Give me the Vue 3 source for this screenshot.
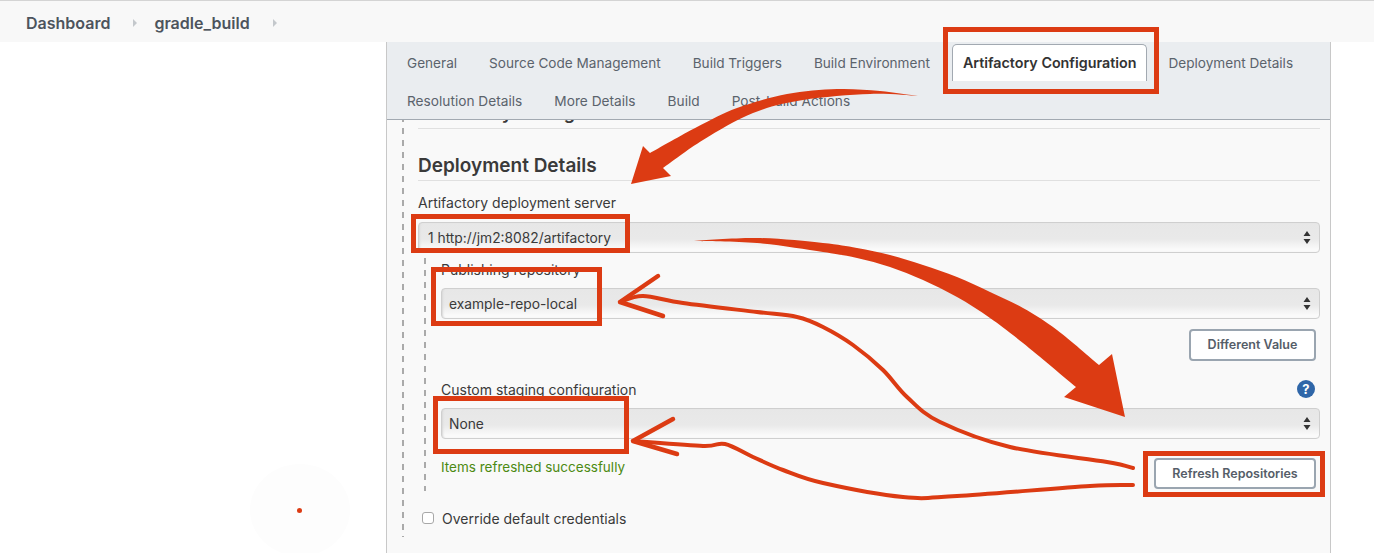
<script setup>
const firstRow = ['General', 'Source Code Management', 'Build Triggers', 'Build Environment']
const secondRow = ['Resolution Details', 'More Details', 'Build', 'Post-build Actions']

function smooth(pts) {
  let d = ''
  for (let i = 0; i < pts.length - 1; i++) {
    const p0 = pts[i - 1] || pts[i]
    const p1 = pts[i]
    const p2 = pts[i + 1]
    const p3 = pts[i + 2] || p2
    const c1 = [p1[0] + (p2[0] - p0[0]) / 6, p1[1] + (p2[1] - p0[1]) / 6]
    const c2 = [p2[0] - (p3[0] - p1[0]) / 6, p2[1] - (p3[1] - p1[1]) / 6]
    d += ` C${c1[0].toFixed(1)} ${c1[1].toFixed(1)} ${c2[0].toFixed(1)} ${c2[1].toFixed(1)} ${p2[0]} ${p2[1]}`
  }
  return d
}

const fatDown = 'M692 241' +
  smooth([[692, 241], [757, 238], [823, 243], [857, 248], [890, 255], [923, 265], [957, 277], [990, 292], [1023, 308], [1057, 330], [1099, 365]]) +
  ' L1112 354 L1125 417 L1064 397 L1076 387' +
  smooth([[1076, 387], [1023, 343], [990, 318], [957, 297], [923, 280], [890, 267], [857, 258], [823, 252], [757, 243], [692, 241]]) + ' Z'

const fatUp = 'M918 96' +
  smooth([[918, 96], [880, 91], [837, 89], [787, 94], [737, 108], [697, 127], [650, 153]]) +
  ' L643 146 L631 184 L671 176 L663 168' +
  smooth([[663, 168], [703, 140], [753, 113], [803, 100], [870, 94], [918, 96]]) + ' Z'

const pts1 = [[1133, 468], [1107, 462], [1010, 447], [940, 422], [907, 397], [883, 370], [853, 345], [823, 327], [797, 317], [757, 312], [683, 303], [643, 296], [620, 302]]
const line1 = 'M1133 468' + smooth(pts1)
const pts2 = [[1133, 485], [1090, 486], [957, 496], [903, 497], [823, 483], [783, 470], [753, 457], [725, 444], [703, 446], [633, 441]]
const line2 = 'M1133 485' + smooth(pts2)
</script>

<template>
  <div class="page">
    <header class="crumbs">
      <span class="crumb">Dashboard</span>
      <svg class="caret" width="6" height="10" viewBox="0 0 6 10"><path d="M1 1l4 4-4 4z" /></svg>
      <span class="crumb">gradle_build</span>
      <svg class="caret" width="6" height="10" viewBox="0 0 6 10"><path d="M1 1l4 4-4 4z" /></svg>
    </header>

    <main class="main">
      <section class="panel">
        <nav class="tabs">
          <span v-for="t in firstRow" :key="t" class="tab">{{ t }}</span>
          <span class="tab active">Artifactory Configuration</span>
          <span class="tab">Deployment Details</span>
          <span v-for="t in secondRow" :key="t" class="tab lower">{{ t }}</span>
        </nav>

        <div class="body">
          <form class="form" @submit.prevent>
            <h2 class="clipped">Artifactory Configuration</h2>
            <h2 class="heading">Deployment Details</h2>

            <label class="label first">Artifactory deployment server</label>
            <div class="select">
              <span>1 http://jm2:8082/artifactory</span>
              <svg width="8" height="13" viewBox="0 0 8 13"><path d="M4 0l3.5 5h-7zM4 13L.5 8h7z" /></svg>
            </div>

            <div class="nested">
              <label class="label">Publishing repository</label>
              <div class="select inset">
                <span>example-repo-local</span>
                <svg width="8" height="13" viewBox="0 0 8 13"><path d="M4 0l3.5 5h-7zM4 13L.5 8h7z" /></svg>
              </div>
              <div class="actions">
                <button type="button" class="btn">Different Value</button>
              </div>

              <div class="label-row">
                <label class="label">Custom staging configuration</label>
                <span class="help">?</span>
              </div>
              <div class="select inset">
                <span>None</span>
                <svg width="8" height="13" viewBox="0 0 8 13"><path d="M4 0l3.5 5h-7zM4 13L.5 8h7z" /></svg>
              </div>
              <div class="refresh-row">
                <span class="ok">Items refreshed successfully</span>
                <button type="button" class="btn refresh">Refresh Repositories</button>
              </div>
            </div>

            <label class="check">
              <input type="checkbox" />
              <span>Override default credentials</span>
            </label>
          </form>
        </div>
      </section>
    </main>

    <svg class="marks" width="1374" height="553" viewBox="0 0 1374 553" fill="none">
      <ellipse cx="300" cy="510" rx="50" ry="46" fill="#fdfdfd" />
      <circle cx="299.5" cy="510.5" r="2.5" fill="#dc3b13" />

      <g stroke="#dc3b13" stroke-width="5">
        <rect x="945.5" y="29.5" width="211" height="62" />
        <rect x="413.5" y="216.5" width="214" height="34" />
        <rect x="433.5" y="269.5" width="166" height="54" />
        <rect x="435.5" y="398.5" width="191" height="53" />
        <rect x="1145.5" y="453.5" width="177" height="41" />
      </g>

      <path :d="fatDown" fill="#dc3b13" />
      <path :d="fatUp" fill="#dc3b13" />

      <g stroke="#dc3b13" stroke-width="4" stroke-linecap="round" stroke-linejoin="round">
        <path :d="line1" />
        <path d="M658 276L620 302L663 316" stroke-width="4.5" />
        <path :d="line2" />
        <path d="M673 419L633 441L677 454" stroke-width="4.5" />
      </g>
    </svg>
  </div>
</template>

<style scoped>
.page {
  position: relative;
  width: 1374px;
  height: 553px;
  overflow: hidden;
  background: #fff;
  font-family: Inter, "Liberation Sans", sans-serif;
  color: #333;
}
.crumbs {
  box-sizing: border-box;
  height: 42px;
  padding: 2px 0 0 26px;
  display: flex;
  align-items: center;
  background: #f8f8f8;
  border-top: 1px solid #d4d4d4;
}
.crumb {
  font-size: 16px;
  font-weight: 600;
  color: #4d545d;
}
.caret {
  margin: 0 16px 0 22px;
  fill: #c4c8cc;
}
.main {
  height: 511px;
  padding-left: 386px;
}
.panel {
  box-sizing: border-box;
  width: 945px;
  height: 511px;
  display: flex;
  flex-direction: column;
  border-left: 1px solid #c8c8c8;
  border-right: 1px solid #c8c8c8;
  background: #f9f9f9;
}
.tabs {
  position: relative;
  z-index: 1;
  flex: none;
  box-sizing: border-box;
  height: 78px;
  padding: 2px 0 0 9px;
  display: flex;
  flex-wrap: wrap;
  align-content: flex-start;
  column-gap: 10px;
  background: #eaedf0;
  border-bottom: 1px solid #a2a9b1;
}
.tab {
  box-sizing: border-box;
  height: 38px;
  padding: 0 11px;
  display: flex;
  align-items: center;
  font-size: 13.6px;
  color: #5b636c;
  white-space: nowrap;
}
.tab.lower {
  font-size: 13.7px;
}
.tab.active {
  height: 37px;
  margin: 0 0 1px 1px;
  background: #fff;
  border: 1px solid #a2a9b1;
  border-bottom: 0;
  border-radius: 5px 5px 0 0;
  padding: 0 10px 1px;
  font-size: 14.3px;
  font-weight: 600;
  color: #333;
}
.body {
  flex: 1;
  min-height: 0;
  overflow: hidden;
  padding: 0 10px 0 15px;
}
.form {
  box-sizing: border-box;
  height: 100%;
  padding-left: 16px;
  background: repeating-linear-gradient(#aaa 0 6px, transparent 6px 12px) left top / 2px 100% no-repeat;
}
h2 {
  margin: 0;
  font-weight: 600;
  color: #3a3a3a;
}
.clipped {
  box-sizing: border-box;
  height: 25px;
  margin-top: -16px;
  font-size: 18px;
  line-height: 18px;
  border-bottom: 1px solid #e0e0e0;
}
.heading {
  margin-top: 25px;
  font-size: 19px;
  line-height: 24px;
  padding-bottom: 2px;
  border-bottom: 1px solid #e0e0e0;
}
.label {
  display: block;
  font-size: 14px;
  line-height: 20px;
  color: #3a3a3a;
}
.label.first {
  margin-top: 12px;
  margin-bottom: 9px;
}
.select {
  box-sizing: border-box;
  height: 31px;
  padding: 0 8px 0 9px;
  display: flex;
  align-items: center;
  justify-content: space-between;
  font-size: 13.8px;
  color: #3a3a3a;
  border: 1px solid #cfcfcf;
  border-radius: 4px;
  background: linear-gradient(#e7e7e7 0, #e9e9e9 55%, #fafafa 90%);
  box-shadow: inset 2px 0 2px -1px #d8d8d8;
}
.select svg {
  fill: #333;
}
.nested {
  margin: 5px 0 0 6px;
  padding: 2px 0 2px 17px;
  background: repeating-linear-gradient(#aaa 0 6px, transparent 6px 12px) left top / 2px 100% no-repeat;
}
.select.inset {
  margin-top: 8px;
  padding-left: 7px;
}
.actions {
  margin-top: 10px;
  padding-right: 4px;
  display: flex;
  justify-content: flex-end;
}
.btn {
  box-sizing: border-box;
  height: 32px;
  padding: 0 0 2px;
  width: 127px;
  font-family: inherit;
  font-size: 12.5px;
  font-weight: 600;
  color: #555d68;
  background: #fff;
  border: 2px solid #9aa5b0;
  border-radius: 4px;
}
.label-row {
  margin-top: 19px;
  padding-right: 5px;
  display: flex;
  align-items: flex-start;
  justify-content: space-between;
}
.help {
  width: 18px;
  height: 18px;
  border-radius: 50%;
  background: #2f66a8;
  color: #fff;
  font-size: 13px;
  font-weight: 700;
  line-height: 18px;
  text-align: center;
}
.refresh-row {
  margin-top: 18px;
  padding-right: 4px;
  display: flex;
  justify-content: space-between;
  align-items: flex-start;
}
.ok {
  font-size: 13.5px;
  line-height: 20px;
  color: #4c8a12;
}
.btn.refresh {
  width: 162px;
  height: 31px;
  margin-top: 1px;
  padding: 0;
}
.check {
  margin: 17px 0 0 4px;
  display: flex;
  align-items: center;
  height: 20px;
  font-size: 14px;
  color: #3a3a3a;
}
.check input {
  appearance: none;
  box-sizing: border-box;
  width: 12px;
  height: 12px;
  margin: 0 8px 0 0;
  background: #fff;
  border: 1px solid #a8a8a8;
  border-radius: 3px;
}
.marks {
  position: absolute;
  z-index: 2;
  top: 0;
  left: 0;
  pointer-events: none;
}
</style>
